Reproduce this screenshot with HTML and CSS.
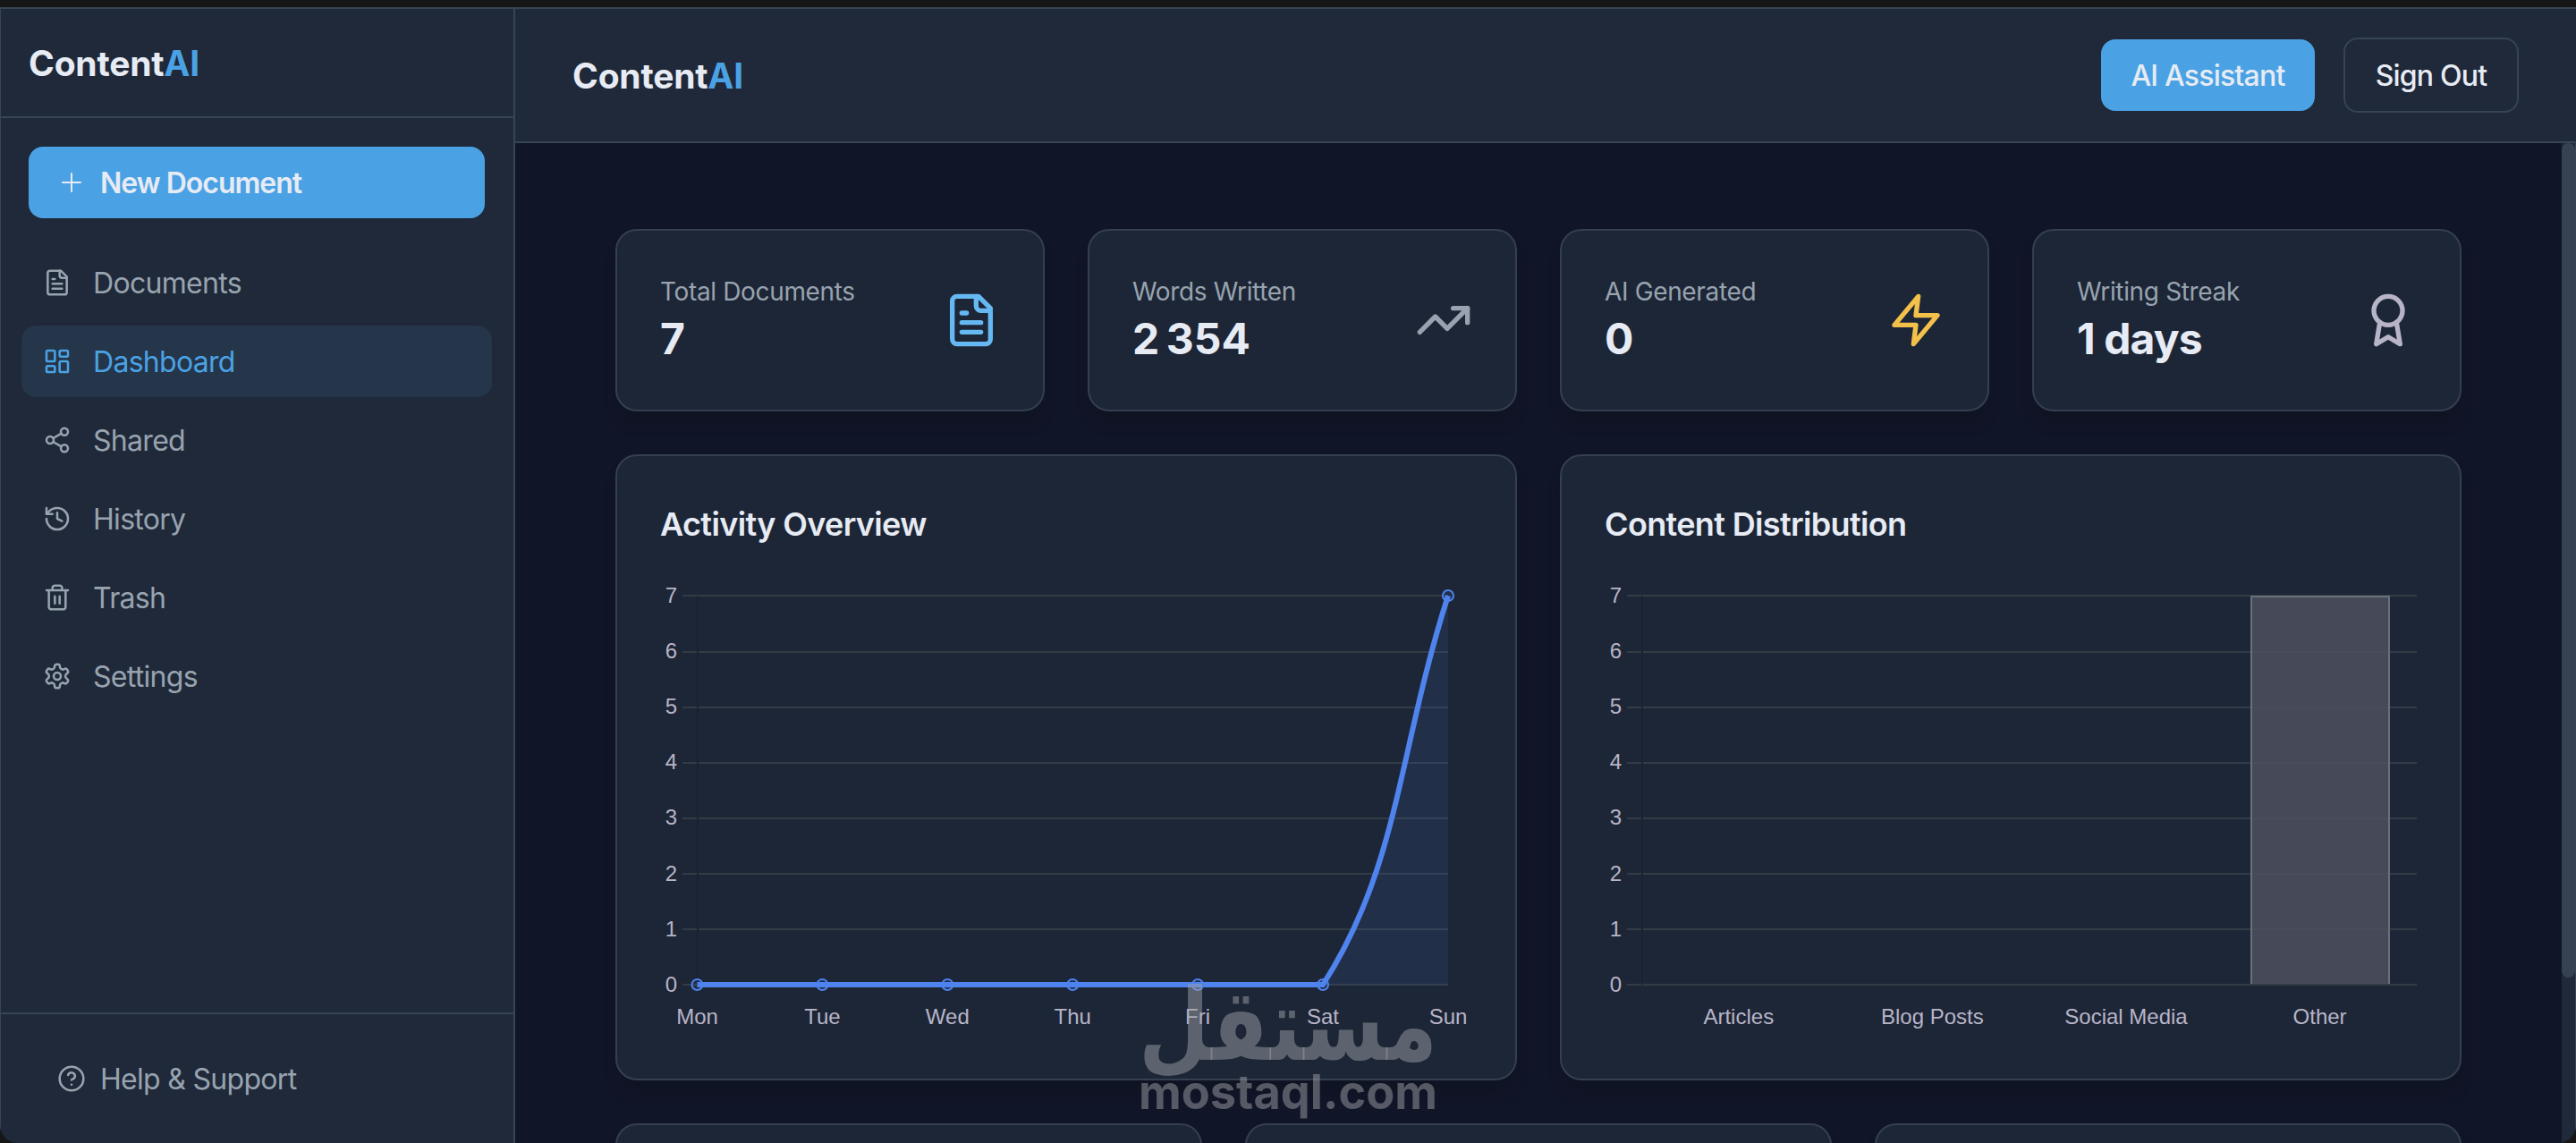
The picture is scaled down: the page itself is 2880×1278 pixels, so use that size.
FILE: index.html
```html
<!DOCTYPE html>
<html lang="en">
<head>
    <meta charset="UTF-8">
    <meta name="viewport" content="width=device-width, initial-scale=1.0">
    <title>ContentAI</title>
    <link rel="stylesheet" href="styles.css">
</head>
<body>
    <div class="window">
        <aside class="sidebar">
            <div class="sidebar-header">
                <span class="logo">Content<b>AI</b></span>
            </div>
            <button class="new-document">
                <svg class="icon thin" viewBox="0 0 24 24"><path d="M12 4.5v15M4.5 12h15"/></svg>
                <span>New Document</span>
            </button>
            <nav>
                <a class="nav-item" href="#">
                    <svg class="icon" viewBox="0 0 24 24"><path d="M15 2H6a2 2 0 0 0-2 2v16a2 2 0 0 0 2 2h12a2 2 0 0 0 2-2V7Z"/><path d="M14 2v4a2 2 0 0 0 2 2h4M10 9H8M16 13H8M16 17H8"/></svg>
                    <span>Documents</span>
                </a>
                <a class="nav-item active" href="#">
                    <svg class="icon" viewBox="0 0 24 24"><rect width="7" height="9" x="3" y="3" rx="1"/><rect width="7" height="5" x="14" y="3" rx="1"/><rect width="7" height="9" x="14" y="12" rx="1"/><rect width="7" height="5" x="3" y="16" rx="1"/></svg>
                    <span>Dashboard</span>
                </a>
                <a class="nav-item" href="#">
                    <svg class="icon" viewBox="0 0 24 24"><circle cx="18" cy="5" r="3"/><circle cx="6" cy="12" r="3"/><circle cx="18" cy="19" r="3"/><path d="M8.59 13.51l6.83 3.98M15.41 6.51l-6.82 3.98"/></svg>
                    <span>Shared</span>
                </a>
                <a class="nav-item" href="#">
                    <svg class="icon" viewBox="0 0 24 24"><path d="M3 12a9 9 0 1 0 9-9 9.75 9.75 0 0 0-6.74 2.74L3 8"/><path d="M3 3v5h5M12 7v5l4 2"/></svg>
                    <span>History</span>
                </a>
                <a class="nav-item" href="#">
                    <svg class="icon" viewBox="0 0 24 24"><path d="M3 6h18M19 6v14c0 1-1 2-2 2H7c-1 0-2-1-2-2V6M8 6V4c0-1 1-2 2-2h4c1 0 2 1 2 2v2M10 11v6M14 11v6"/></svg>
                    <span>Trash</span>
                </a>
                <a class="nav-item" href="#">
                    <svg class="icon" viewBox="0 0 24 24"><path d="M12.22 2h-.44a2 2 0 0 0-2 2v.18a2 2 0 0 1-1 1.73l-.43.25a2 2 0 0 1-2 0l-.15-.08a2 2 0 0 0-2.73.73l-.22.38a2 2 0 0 0 .73 2.73l.15.1a2 2 0 0 1 1 1.72v.51a2 2 0 0 1-1 1.74l-.15.09a2 2 0 0 0-.73 2.73l.22.38a2 2 0 0 0 2.73.73l.15-.08a2 2 0 0 1 2 0l.43.25a2 2 0 0 1 1 1.73V20a2 2 0 0 0 2 2h.44a2 2 0 0 0 2-2v-.18a2 2 0 0 1 1-1.73l.43-.25a2 2 0 0 1 2 0l.15.08a2 2 0 0 0 2.73-.73l.22-.39a2 2 0 0 0-.73-2.73l-.15-.08a2 2 0 0 1-1-1.74v-.5a2 2 0 0 1 1-1.74l.15-.09a2 2 0 0 0 .73-2.73l-.22-.38a2 2 0 0 0-2.73-.73l-.15.08a2 2 0 0 1-2 0l-.43-.25a2 2 0 0 1-1-1.73V4a2 2 0 0 0-2-2z"/><circle cx="12" cy="12" r="3"/></svg>
                    <span>Settings</span>
                </a>
            </nav>
            <div class="sidebar-footer">
                <svg class="icon" viewBox="0 0 24 24"><circle cx="12" cy="12" r="10"/><path d="M9.09 9a3 3 0 0 1 5.83 1c0 2-3 3-3 3M12 17h.01"/></svg>
                <span>Help &amp; Support</span>
            </div>
        </aside>

        <div class="main">
            <header>
                <span class="logo">Content<b>AI</b></span>
                <div class="actions">
                    <button class="btn btn-primary">AI Assistant</button>
                    <button class="btn btn-outline">Sign Out</button>
                </div>
            </header>

            <div class="scroll-area">
                <div class="content">
                    <!-- Stat cards -->
                    <div class="stats">
                        <div class="card stat">
                            <div>
                                <p>Total Documents</p>
                                <h3>7</h3>
                            </div>
                            <svg class="icon blue" viewBox="0 0 24 24"><path d="M15 2H6a2 2 0 0 0-2 2v16a2 2 0 0 0 2 2h12a2 2 0 0 0 2-2V7Z"/><path d="M14 2v4a2 2 0 0 0 2 2h4M10 9H8M16 13H8M16 17H8"/></svg>
                        </div>
                        <div class="card stat">
                            <div>
                                <p>Words Written</p>
                                <h3>2&#8239;354</h3>
                            </div>
                            <svg class="icon gray" viewBox="0 0 24 24"><path d="M22 7l-8.5 8.5-5-5L2 17"/><path d="M16 7h6v6"/></svg>
                        </div>
                        <div class="card stat">
                            <div>
                                <p>AI Generated</p>
                                <h3>0</h3>
                            </div>
                            <svg class="icon yellow" viewBox="0 0 24 24"><path d="M13 2L3 14h9l-1 8 10-12h-9l1-8z"/></svg>
                        </div>
                        <div class="card stat">
                            <div>
                                <p>Writing Streak</p>
                                <h3 class="streak">1 days</h3>
                            </div>
                            <svg class="icon lilac" viewBox="0 0 24 24"><circle cx="12" cy="8" r="6"/><path d="M15.477 12.89L17 22l-5-3-5 3 1.523-9.11"/></svg>
                        </div>
                    </div>

                    <!-- Charts -->
                    <div class="charts">
                        <div class="card chart">
                            <h2>Activity Overview</h2>
                            <svg width="908" height="518" viewBox="0 0 908 518">
                                <path class="grid" d="M25 26H881M25 89H881M25 151H881M25 213H881M25 275H881M25 337H881M25 399H881M25 461H881"/>
                                <path class="axis" d="M42 26V461"/>
                                <g class="labels y-labels">
                                    <text x="19" y="34">7</text>
                                    <text x="19" y="96">6</text>
                                    <text x="19" y="158">5</text>
                                    <text x="19" y="220">4</text>
                                    <text x="19" y="282">3</text>
                                    <text x="19" y="345">2</text>
                                    <text x="19" y="407">1</text>
                                    <text x="19" y="469">0</text>
                                </g>
                                <g class="labels x-labels">
                                    <text x="41.5" y="505">Mon</text>
                                    <text x="181.4" y="505">Tue</text>
                                    <text x="321.3" y="505">Wed</text>
                                    <text x="461.2" y="505">Thu</text>
                                    <text x="601.1" y="505">Fri</text>
                                    <text x="741" y="505">Sat</text>
                                    <text x="881" y="505">Sun</text>
                                </g>
                                <path class="area" d="M741 461C826.6 328 825 200 881 26V461Z"/>
                                <path class="line" d="M41.5 461H741C826.6 328 825 200 881 26"/>
                                <g class="points">
                                    <circle cx="41.5" cy="461" r="6"/>
                                    <circle cx="181.4" cy="461" r="6"/>
                                    <circle cx="321.3" cy="461" r="6"/>
                                    <circle cx="461.2" cy="461" r="6"/>
                                    <circle cx="601.1" cy="461" r="6"/>
                                    <circle cx="741" cy="461" r="6"/>
                                    <circle cx="881" cy="26" r="6"/>
                                </g>
                            </svg>
                        </div>
                        <div class="card chart">
                            <h2>Content Distribution</h2>
                            <svg width="908" height="518" viewBox="0 0 908 518">
                                <path class="grid" d="M25 26H908M25 89H908M25 151H908M25 213H908M25 275H908M25 337H908M25 399H908M25 461H908"/>
                                <path class="axis" d="M42 26V461"/>
                                <g class="labels y-labels">
                                    <text x="19" y="34">7</text>
                                    <text x="19" y="96">6</text>
                                    <text x="19" y="158">5</text>
                                    <text x="19" y="220">4</text>
                                    <text x="19" y="282">3</text>
                                    <text x="19" y="345">2</text>
                                    <text x="19" y="407">1</text>
                                    <text x="19" y="469">0</text>
                                </g>
                                <g class="labels x-labels">
                                    <text x="149.8" y="505">Articles</text>
                                    <text x="366.4" y="505">Blog Posts</text>
                                    <text x="583" y="505">Social Media</text>
                                    <text x="799.6" y="505">Other</text>
                                </g>
                                <rect class="bar" x="722" y="26" width="156" height="434"/>
                                <path class="bar-line" d="M723 460V27H877V460"/>
                            </svg>
                        </div>
                    </div>

                    <div class="panels">
                        <div class="card panel"></div>
                        <div class="card panel"></div>
                        <div class="card panel"></div>
                    </div>
                </div>
                <div class="scrollbar"><div class="thumb"></div></div>
            </div>
        </div>
    </div>

    <svg class="watermark" width="360" height="180" viewBox="0 0 360 180">
        <text class="mark-ar" x="180" y="87" textLength="334" lengthAdjust="spacingAndGlyphs">مستقل</text>
        <text class="mark-en" x="180" y="142" textLength="334" lengthAdjust="spacingAndGlyphs">mostaql.com</text>
    </svg>
</body>
</html>
```
FILE: styles.css
```css
* {
    margin: 0;
    padding: 0;
    box-sizing: border-box;
}
body {
    background: #161616;
    color: #e7ebf4;
    font-family: Inter, "Liberation Sans", sans-serif;
    font-size: 32px;
    letter-spacing: -0.7px;
    height: 1278px;
    padding-top: 8px;
    overflow: hidden;
}
button {
    font: inherit;
    color: inherit;
    letter-spacing: inherit;
    white-space: nowrap;
    border: none;
}
.window {
    display: flex;
    height: 1270px;
    background: #111528;
    border-top: 2px solid #374453;
    border-radius: 0 0 20px 20px;
    overflow: hidden;
}
.icon {
    width: 32px;
    height: 32px;
    fill: none;
    stroke: currentColor;
    stroke-width: 1.9;
    stroke-linecap: round;
    stroke-linejoin: round;
    flex-shrink: 0;
}
.icon.thin {
    stroke-width: 1.5;
}
.logo {
    font-size: 39px;
    font-weight: 650;
    line-height: 56px;
    letter-spacing: -0.2px;
}
.logo b {
    font-weight: 700;
    color: #4aa2e4;
}

/* Sidebar */
.sidebar {
    width: 576px;
    background: #1f2939;
    border-left: 1px solid #374453;
    border-right: 2px solid #374453;
    display: flex;
    flex-direction: column;
}
.sidebar-header {
    height: 122px;
    padding: 33px 31px 31px;
    border-bottom: 2px solid #374453;
}
.new-document {
    display: flex;
    align-items: center;
    gap: 16px;
    height: 80px;
    margin: 32px 32px 32px 31px;
    padding: 0 32px;
    background: #4aa2e4;
    border-radius: 16px;
    font-weight: 600;
    letter-spacing: -1px;
}
nav {
    flex: 1;
    display: flex;
    flex-direction: column;
    gap: 8px;
    padding: 0 24px 0 23px;
}
.nav-item {
    display: flex;
    align-items: center;
    gap: 24px;
    height: 80px;
    padding: 0 24px;
    border-radius: 16px;
    color: #98a3af;
    text-decoration: none;
}
.nav-item.active {
    background: #25354a;
    color: #4aa2e4;
}
.sidebar-footer {
    display: flex;
    align-items: center;
    gap: 16px;
    height: 146px;
    padding: 0 63px;
    border-top: 2px solid #374453;
    color: #98a3af;
}

/* Main column */
.main {
    flex: 1;
    display: flex;
    flex-direction: column;
}
header {
    height: 150px;
    padding: 0 64px;
    display: flex;
    justify-content: space-between;
    align-items: center;
    background: #1f2939;
    border-bottom: 2px solid #374453;
}
header .logo {
    padding-top: 2px;
}
.actions {
    display: flex;
    align-items: center;
    gap: 32px;
}
.btn {
    height: 80px;
    border-radius: 16px;
    font-weight: 500;
    letter-spacing: -0.8px;
}
.btn-primary {
    width: 239px;
    background: #4aa2e4;
}
.btn-outline {
    width: 196px;
    height: 84px;
    background: none;
    border: 2px solid #374453;
}
.scroll-area {
    flex: 1;
    min-height: 0;
    display: flex;
    overflow: hidden;
}
.content {
    flex: 1;
    padding: 96px 112px 0;
    display: flex;
    flex-direction: column;
    gap: 48px;
}
.scrollbar {
    width: 16px;
    height: 1118px;
    background: #1f2939;
    border-right: 1px solid #374453;
}
.thumb {
    height: 933px;
    border-radius: 8px;
    background: #364152;
}

/* Cards */
.card {
    background: #1d2636;
    border: 2px solid #343f4f;
    border-radius: 24px;
    box-shadow: 0 16px 16px -6px rgba(13, 20, 30, 0.6);
}
.stats {
    display: grid;
    grid-template-columns: repeat(4, 1fr);
    gap: 48px;
}
.stat {
    height: 204px;
    padding: 0 48px;
    display: flex;
    justify-content: space-between;
    align-items: center;
}
.stat p {
    font-size: 28px;
    line-height: 40px;
    letter-spacing: -0.35px;
    color: #98a3af;
}
.stat h3 {
    font-size: 48px;
    line-height: 62px;
    padding-top: 2px;
    font-weight: 700;
    letter-spacing: -1.8px;
}
.stat .streak {
    letter-spacing: -0.9px;
}
.stat .icon {
    width: 64px;
    height: 64px;
    stroke-width: 2;
}
.blue {
    color: #66b8f3;
}
.gray {
    color: #98a3af;
}
.yellow {
    color: #f3c04a;
}
.lilac {
    color: #b8b4c8;
}
.charts {
    display: grid;
    grid-template-columns: repeat(2, 1fr);
    gap: 48px;
}
.chart {
    height: 700px;
    padding: 48px;
}
.chart h2 {
    font-size: 36px;
    line-height: 56px;
    font-weight: 600;
    letter-spacing: -0.65px;
    margin-bottom: 26px;
}
.chart svg {
    display: block;
}
.grid {
    stroke: #323c47;
    stroke-width: 2;
}
.axis {
    stroke: #1a2230;
    stroke-width: 2;
}
.labels {
    font-family: "Liberation Sans", sans-serif;
    font-size: 24px;
    letter-spacing: 0;
    fill: #b8b4c8;
}
.y-labels {
    text-anchor: end;
}
.x-labels {
    text-anchor: middle;
}
.area {
    fill: rgba(79, 131, 240, 0.1);
}
.line {
    fill: none;
    stroke: #4f83ee;
    stroke-width: 6;
}
.points circle {
    fill: rgba(79, 131, 240, 0.1);
    stroke: #4f83ee;
    stroke-width: 2;
}
.bar {
    fill: rgba(75, 79, 92, 0.9);
}
.bar-line {
    fill: none;
    stroke: #69707b;
    stroke-width: 2;
}
.panels {
    display: grid;
    grid-template-columns: repeat(3, 1fr);
    gap: 48px;
}
.panel {
    height: 400px;
}

/* Watermark over the page */
.watermark {
    position: absolute;
    left: 1260px;
    top: 1098px;
    overflow: visible;
    fill: rgba(157, 160, 165, 0.5);
    text-anchor: middle;
    font-weight: 700;
    letter-spacing: 0;
}
.mark-ar {
    font-family: "DejaVu Sans", sans-serif;
    font-size: 112px;
}
.mark-en {
    font-family: Inter, sans-serif;
    font-size: 54px;
}
```
